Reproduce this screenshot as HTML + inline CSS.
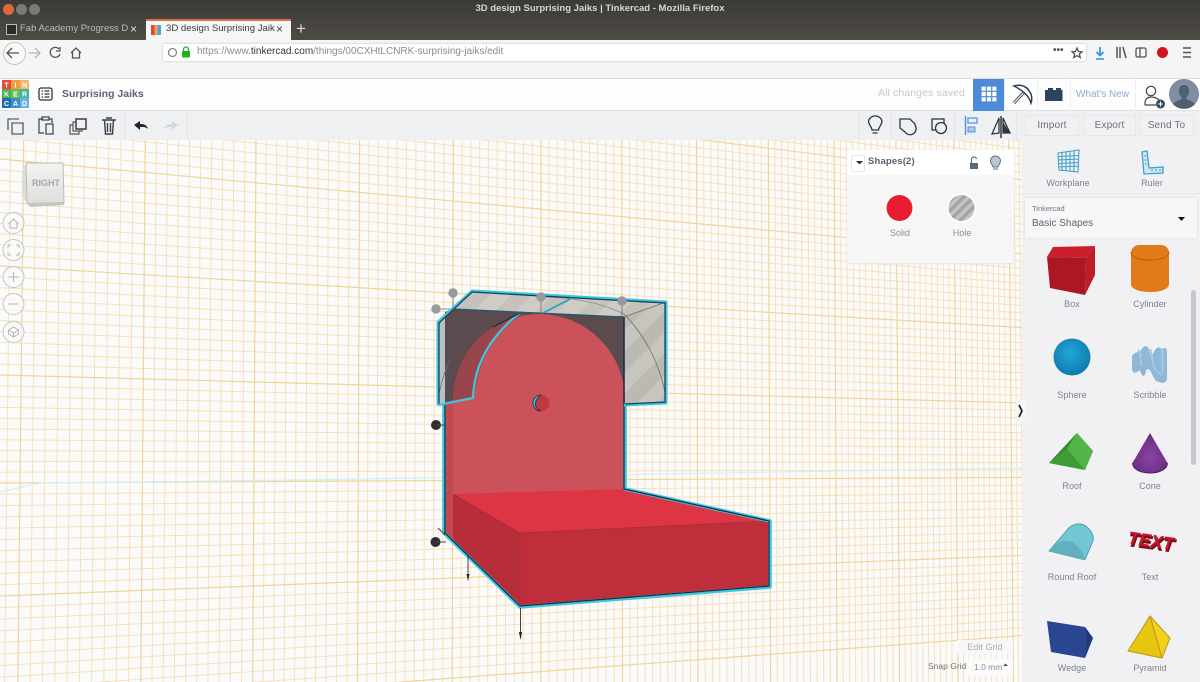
<!DOCTYPE html>
<html><head><meta charset="utf-8"><title>3D design Surprising Jaiks | Tinkercad</title>
<style>
html,body{margin:0;padding:0;width:1200px;height:682px;overflow:hidden;background:#fff;font-family:"Liberation Sans",sans-serif}
#r{position:relative;width:1200px;height:682px;overflow:hidden}
.a{position:absolute}
.t{position:absolute;white-space:nowrap;line-height:1}
.l{position:absolute;white-space:nowrap;line-height:1;font-size:9px;color:#7b8290;letter-spacing:.05px;text-align:center;width:70px}
svg{position:absolute;left:0;top:0;overflow:visible}
.b{position:absolute;top:115px;height:19px;border:1px solid #e6e7e9;background:#f0f1f3;color:#6d7178;font-size:10px;line-height:19px;text-align:center;letter-spacing:.15px;box-sizing:content-box}
</style></head><body><div id="r">
<!-- canvas -->
<svg id="g" width="1022" height="542" viewBox="0 140 1022 542" style="left:0;top:140px;background:#fbfbfc;overflow:hidden;filter:blur(.35px)"></svg>
<script>
(function(){var s='',v=[-110,22,144,255,359,453,541,622,697,769,835,897,955,1010,1062],h=[-60,52,159,266,375,483,596,712],i,j;
function V(x,c,w){var d=(x-560)*.00002;s+='<line x1="'+(x+d*(140-300)).toFixed(1)+'" y1="140" x2="'+(x+d*(682-300)).toFixed(1)+'" y2="682" stroke="'+c+'" stroke-width="'+w+'"/>';}
function H(y,c,w){var e=y+(465-y)*1022/3300;s+='<line x1="0" y1="'+y.toFixed(1)+'" x2="1022" y2="'+e.toFixed(1)+'" stroke="'+c+'" stroke-width="'+w+'"/>';}
for(i=0;i<v.length-1;i++)for(j=1;j<10;j++)V(v[i]+(v[i+1]-v[i])*j/10,'#f6e1ba',1);
for(i=0;i<h.length-1;i++)for(j=1;j<10;j++)H(h[i]+(h[i+1]-h[i])*j/10,'#f6e1ba',1);
for(i=0;i<v.length;i++)V(v[i],'#f1d49c',1.2);
for(i=0;i<h.length;i++)H(h[i],'#f1d49c',1.2);
document.getElementById('g').innerHTML=s;})();
</script>

<div class="a" style="left:0;top:0;width:1200px;height:40px;background:linear-gradient(#3b3a36,#4e4b44)"></div>
<div class="t" style="left:0;width:1200px;text-align:center;top:4px;font-size:9.5px;font-weight:bold;color:#d8d6d0">3D design Surprising Jaiks | Tinkercad - Mozilla Firefox</div>
<div class="a" style="left:3px;top:4px;width:11px;height:11px;border-radius:50%;background:#e0673a"></div>
<div class="a" style="left:16px;top:4px;width:11px;height:11px;border-radius:50%;background:#7b7a74"></div>
<div class="a" style="left:29px;top:4px;width:11px;height:11px;border-radius:50%;background:#7b7a74"></div>
<div class="a" style="left:6px;top:24px;width:9px;height:9px;background:#2a2a2a;border:1px solid #bbb"></div>
<div class="t" style="left:20px;top:24px;font-size:9.5px;color:#bdbcb6">Fab Academy Progress D</div>
<div class="t" style="left:130px;top:23px;font-size:12px;color:#ddd">×</div>
<div class="a" style="left:146px;top:19px;width:145px;height:21px;background:#f5f6f7;border-top:2px solid #d9704a;box-sizing:border-box"></div>
<div class="a" style="left:151px;top:25px;width:10px;height:10px;background:linear-gradient(90deg,#e8433a 33%,#f5a04b 33%,#f5a04b 66%,#4aa8d8 66%)"></div>
<div class="t" style="left:166px;top:24px;font-size:9.6px;color:#3c3c3c">3D design Surprising Jaik</div>
<div class="t" style="left:276px;top:23px;font-size:12px;color:#444">×</div>
<div class="t" style="left:296px;top:20px;font-size:17px;color:#ddd">+</div>
<div class="a" style="left:0;top:40px;width:1200px;height:39px;background:#f5f5f5;border-bottom:1px solid #dcdcdc;box-sizing:border-box"></div>
<div class="a" style="left:3px;top:42px;width:21px;height:21px;border-radius:50%;background:#fafafa;border:1px solid #c4c4c4"></div>
<div class="a" style="left:163px;top:44px;width:923px;height:17px;background:#fff;border-radius:2px;box-shadow:0 0 2px #bbb"></div>
<div class="t" style="left:197px;top:47px;font-size:10px;color:#8b8b8b">https://www.<span style="color:#333">tinkercad.com</span>/things/00CXHtLCNRK-surprising-jaiks/edit</div>
<div class="t" style="left:1053px;top:46px;font-size:10px;color:#555;font-weight:bold">•••</div>

<svg width="1200" height="682" viewBox="0 0 1200 682" style="z-index:1">
<g fill="none" stroke="#555" stroke-width="1.3">
<path d="M19 53H7M12 48l-5 5 5 5"/><path d="M40 53H29M35 48l5 5-5 5" stroke="#b5b5b5"/>
<path d="M59 49a5 5 0 1 0 1 5M60 47v4h-4"/><path d="M71 53l5-5 5 5M72.500 52v6h7v-6"/>
<circle cx="172.500" cy="52.500" r="4" stroke="#888"/>
<path d="M1077 48l1.500 3.500 3.500.3-2.700 2.300 1 3.500-3.300-2-3.300 2 1-3.500-2.700-2.300 3.500-.3z"/>
<path d="M1117 47v11M1120 47v11M1123 47l3 11" stroke-width="1.500"/><rect x="1136" y="48" width="10" height="9" rx="1.500"/><path d="M1140 48v9"/>
<path d="M1183 48h8M1183 52.500h8M1183 57h8" stroke-width="1.500"/>
</g>
<path d="M1100 47v8M1096.500 52l3.500 3.500 3.500-3.500M1096 59h8" fill="none" stroke="#2a90e0" stroke-width="1.600"/>
<circle cx="1162.500" cy="52.500" r="5.500" fill="#d0141c"/>
<rect x="182" y="51" width="8" height="6.500" rx="1" fill="#22b022"/><path d="M183.500 51v-1.500a2.500 2.500 0 0 1 5 0V51" fill="none" stroke="#22b022" stroke-width="1.300"/>
</svg>

<!-- header -->
<div class="a" style="left:0;top:79px;width:1200px;height:32px;background:#fdfdfd;border-bottom:1px solid #dfe1e4;box-sizing:border-box"></div>
<svg width="1200" height="682" viewBox="0 0 1200 682" style="z-index:1">
<g>
<rect x="2" y="80" width="9" height="9" fill="#e8483c"/><rect x="11" y="80" width="9" height="9" fill="#f29a42"/><rect x="20" y="80" width="9" height="9" fill="#f5b56a"/>
<rect x="2" y="89" width="9" height="9" fill="#4caf50"/><rect x="11" y="89" width="9" height="9" fill="#68bd55"/><rect x="20" y="89" width="9" height="9" fill="#45b29a"/>
<rect x="2" y="98" width="9" height="10" fill="#1f6fb0"/><rect x="11" y="98" width="9" height="10" fill="#3b8fd0"/><rect x="20" y="98" width="9" height="10" fill="#68b4e0"/>
</g>
<g font-family="Liberation Sans" font-size="7" font-weight="bold" fill="#fff" text-anchor="middle">
<text x="6.500" y="87.500">T</text><text x="15.500" y="87.500">I</text><text x="24.500" y="87.500">N</text>
<text x="6.500" y="96.500">K</text><text x="15.500" y="96.500">E</text><text x="24.500" y="96.500">R</text>
<text x="6.500" y="106">C</text><text x="15.500" y="106">A</text><text x="24.500" y="106">D</text></g>
<g fill="none" stroke="#333" stroke-width="1.300"><rect x="39" y="88" width="13" height="12" rx="2"/><path d="M41.500 91h1.500M41.500 94h1.500M41.500 97h1.500M44.500 91h5M44.500 94h5M44.500 97h5"/></g>
<rect x="973" y="79" width="32" height="32" fill="#4d8bd8"/>
<path d="M981 86h16v16h-16zM986.300 86v16M991.700 86v16M981 91.300h16M981 96.700h16" fill="#fff" stroke="#4d8bd8" stroke-width="1.200"/>
<path d="M1014 103l14-15" stroke="#2c3e50" stroke-width="3" fill="none"/>
<path d="M1014 103l14-15" stroke="#fff" stroke-width="1.200" fill="none"/>
<path d="M1014 86c7-2 13 0 17 8 1 3 1 6 0 9-2-7-9-13-17-17z" fill="#fff" stroke="#2c3e50" stroke-width="1.500"/>
<path d="M1045 90h3v-2h5v2h3v-2h5v2h1.500v11H1045z" fill="#2b4460"/>
<g fill="none" stroke="#3d4650" stroke-width="1.200"><circle cx="1151" cy="91" r="4.700"/><path d="M1145 105v-2c0-4 3-6 6-6s6 1 8 3M1145 105h11"/></g>
<circle cx="1160.500" cy="104" r="4.500" fill="#34495e"/><path d="M1158 104h5M1160.500 101.500v5" stroke="#fff" stroke-width="1"/>
<circle cx="1184" cy="94" r="15" fill="#7d8ea2"/>
<path d="M1184 85c-4 0-5 3-5 6 0 3 1.500 5 2.500 6.500v2c-3 1-6 1.500-8.500 4.500 2.500 3 6.500 4.500 11 4.500s8.500-1.500 11-4.500c-2.500-3-5.500-3.500-8.500-4.500v-2c1-1.500 2.500-3.500 2.500-6.500 0-3-1-6-5-6z" fill="#4f5e72"/>
<path d="M1004.500 79v32M1037.500 79v32M1070.500 79v32M1135.500 79v32" stroke="#eceef0"/>
</svg>
<div class="t" style="left:62px;top:89px;font-size:10.5px;font-weight:bold;color:#5a6472">Surprising Jaiks</div>
<div class="t" style="left:878px;top:88px;font-size:10.5px;color:#c3c9d1;letter-spacing:.1px">All changes saved</div>
<div class="t" style="left:1076px;top:90px;font-size:10px;color:#8fabd9">What's New</div>

<!-- toolbar -->
<div class="a" style="left:0;top:111px;width:1200px;height:29px;background:#eff0f2"></div>

<svg width="1200" height="682" viewBox="0 0 1200 682" style="z-index:2">
<defs>
<pattern id="s1" width="30" height="30" patternUnits="userSpaceOnUse" patternTransform="rotate(45)"><rect width="30" height="30" fill="#c8c5be"/><rect width="15" height="30" fill="#bcb9b2"/></pattern>
<pattern id="s2" width="30" height="30" patternUnits="userSpaceOnUse" patternTransform="rotate(45)"><rect width="30" height="30" fill="#cfccc6"/><rect width="15" height="30" fill="#c5c2bb"/></pattern>
<pattern id="s3" width="7" height="7" patternUnits="userSpaceOnUse" patternTransform="rotate(45)"><rect width="7" height="7" fill="#c4c4c4"/><rect width="3.500" height="7" fill="#a4a4a4"/></pattern>
</defs>
<path d="M0 492L40 483 300 480 1022 468" fill="none" stroke="#d5eef2" stroke-width="1.200"/>
<!-- hole box -->
<path d="M472 291L666 302 624 317 453 309z" fill="url(#s2)"/>
<path d="M624 317L666 302V403L624 405z" fill="url(#s1)"/>
<path d="M438 322L453 309 445 312V405H438z" fill="#b9c0c4"/>
<path d="M445 312L453 309 624 317V405H445z" fill="#5b4a4e"/>
<!-- wall -->
<path d="M453 400A86 86 0 0 1 625 400V500H444V405z" fill="#cb525b"/>
<path d="M453 400A86 86 0 0 1 520 316C500 330 480 350 474 398L453 402z" fill="#9a454b"/>
<path d="M444 404H453V500H444z" fill="#c04a52"/>
<!-- block -->
<path d="M444 490L453 495V542L444 533z" fill="#c24750"/>
<path d="M453 494L625 489 770 521 520 533z" fill="#de3545"/>
<path d="M453 494L520 533V607L453 541z" fill="#b72e3a"/>
<path d="M520 533L770 521V587L520 607z" fill="#be2f3b"/>
<path d="M453 494L520 533 770 521M520 533V607" fill="none" stroke="#a82a35" stroke-width=".7"/>
<!-- thin lines -->
<g fill="none" stroke="#6e6e6c" stroke-width=".8">
<path d="M624 314C645 335 660 365 665 393"/><path d="M541 297C570 297 600 302 624 314" stroke="#8a8a88"/><path d="M453 293V309M436 309H453M541 297V313M622 301V317M624 317L666 302M453 309L472 291"/>
<path d="M438 398C442 380 445 370 450 360"/>
</g>
<!-- outlines -->
<path d="M444 405V533L520 607 770 587V521L625 489V405" fill="none" stroke="#3fc6de" stroke-width="3.600" stroke-linejoin="round"/>
<path d="M445 405V533L520 606 769 586V521L624 489V317" fill="none" stroke="#14304a" stroke-width="1.300"/>
<path d="M624 317V405" stroke="#14304a" stroke-width="1.400"/>
<path d="M438 405V322L472 291 666 302V403L624 405" fill="none" stroke="#3fc6de" stroke-width="3" stroke-linejoin="round"/>
<path d="M439 404V323L472 292 665 303V402L625 404" fill="none" stroke="#16425a" stroke-width="1.300"/>
<path d="M453 309L624 317" stroke="#1d5a70" stroke-width="1.200" fill="none"/>
<path d="M438 405L473 398C474 370 485 340 520 313" fill="none" stroke="#3fc6de" stroke-width="2.200"/>
<path d="M493 327L520 313" stroke="#16304a" stroke-width="1.200" fill="none"/>
<path d="M543 313L572 298" stroke="#2aa0bc" stroke-width="1.800" fill="none"/>
<!-- center -->
<circle cx="541.500" cy="403" r="8" fill="#c23840"/>
<path d="M541 395a8 8 0 0 0 0 16c-5-2-6-5-5.500-8 .5-3 2-6 5.500-8z" fill="#3fc6de" stroke="#16304a" stroke-width=".8"/>
<!-- handles -->
<g fill="#9a9a9c"><circle cx="453" cy="293" r="4.700"/><circle cx="436" cy="309" r="4.700"/><circle cx="541" cy="297" r="4.700"/><circle cx="622" cy="301" r="4.700"/></g>
<g fill="#2e2e2e"><circle cx="436" cy="425" r="5"/><circle cx="435.500" cy="542" r="5"/></g>
<path d="M436 425H445M436 542H446M438 528L445 535" stroke="#444" stroke-width="1" fill="none"/>
<path d="M468 556V580M520.500 608V638" stroke="#444" stroke-width="1" fill="none"/>
<path d="M466.500 574L468 581 469.500 574zM519 632L520.500 640 522 632z" fill="#222"/>
</svg>

<!-- left nav -->
<svg width="1200" height="682" viewBox="0 0 1200 682" style="z-index:3">
<defs><linearGradient id="cb" x1="0" y1="0" x2="0" y2="1"><stop offset="0" stop-color="#f3f3f1"/><stop offset="1" stop-color="#dededc"/></linearGradient></defs>
<path d="M26 163L22 172V196L27 204z" fill="#dcdcda"/>
<path d="M26 163L63 163 64 203 27 204z" fill="url(#cb)" stroke="#bcbcb8"/>
<path d="M27 203L64 202V205L30 207z" fill="#c4c4c2"/>
<text x="46" y="186" font-family="Liberation Sans" font-size="9" font-weight="bold" text-anchor="middle" fill="#a6a6a6">RIGHT</text>
<g fill="#fbfbfb" fill-opacity=".75" stroke="#c4c4c6">
<circle cx="13.500" cy="223" r="10.500"/><circle cx="13.500" cy="250" r="10.500"/><circle cx="13.500" cy="277" r="10.500"/><circle cx="13.500" cy="304" r="10.500"/><circle cx="13.500" cy="332" r="10.500"/></g>
<g fill="none" stroke="#b4b4b6"><path d="M8.500 224l5-5 5 5M10 223v5h7v-5"/><path d="M8 248v-3h3M16 245h3v3M19 252v3h-3M11 255H8v-3"/><path d="M8.500 277h10M13.500 272v10"/><path d="M8.500 304h10"/><path d="M13.500 327l5 3v4l-5 3-5-3v-4zM8.500 330l5 3 5-3M13.500 333v4"/></g>

<!-- toolbar icons -->
<g fill="none" stroke="#3a3f46" stroke-width="1.200">
<path d="M8 130V119h11M12 134v-11h11v11z" stroke-width="1.100"/>
<path d="M39 129v-10h4M49 119h3v4M39 129l0 4h5"/><rect x="42" y="117" width="7" height="3"/><rect x="46" y="124" width="7" height="10"/>
<rect x="76" y="119" width="10" height="10" stroke-width="1.500"/><path d="M76 122h-3v9h9v-2M73 125h-3v9h9v-3" stroke="#555"/>
<path d="M102 120h14M104.500 120l1 14h7l1-14M106 118h6M107.500 123v9M110.500 123v9" stroke-width="1.400"/>
</g>
<path d="M134 125l6-4v3c4 0 7 1 8 5-2-2-4-2-8-2v3z" fill="#22262b"/>
<path d="M178 125l-6-4v3c-4 0-7 1-8 5 2-2 4-2 8-2v3z" fill="#cfd6e0"/>
<path d="M124.500 112v28M187.500 112v28M859.500 112v28M891.500 112v28M954.500 112v28M1016.500 112v28" stroke="#e3e4e6"/>
<g fill="none" stroke="#2f3640" stroke-width="1.300">
<path d="M872 130c0-3-3.500-5-3.500-9a7 7 0 0 1 13.500 0c0 4-3.500 6-3.500 9zM872.500 133h5"/>
<path d="M900 119h10l5 5v1c1 1 1 3 1 3a6 6 0 0 1-11 4l-5-4z"/>
<rect x="932" y="119" width="12" height="11"/><circle cx="941" cy="128" r="5.500" fill="#eff0f2"/>
<path d="M1001 116v22" stroke-width="1.500"/><path d="M999 118v15l-7 1zM1003 118l7 15h-7z"/>
</g>
<path d="M1003 122v11h7z" fill="#2f3640"/>
<path d="M965.500 116v19" stroke="#5b95e0" stroke-width="1.500"/>
<rect x="968" y="118" width="9" height="5" fill="none" stroke="#5b95e0" stroke-width="1.300"/><rect x="968" y="127" width="7" height="5" fill="#a9c7ef" stroke="#5b95e0"/>
</svg>
<div class="b" style="left:1025px;width:52px;z-index:3">Import</div>
<div class="b" style="left:1083px;width:51px;z-index:3">Export</div>
<div class="b" style="left:1139px;width:53px;z-index:3">Send To</div>

<!-- Shapes panel -->
<div class="a" style="left:847px;top:150px;width:167px;height:113px;background:#f6f6f7;box-shadow:0 1px 2px #e4e4e4;z-index:3"></div>
<div class="a" style="left:847px;top:150px;width:167px;height:25px;background:#fff;z-index:3"></div>
<div class="a" style="left:851px;top:155px;width:12px;height:15px;border:1px solid #e6e6e6;border-radius:2px;background:#fff;z-index:3"></div>
<div class="t" style="left:868px;top:157px;font-size:9.5px;font-weight:bold;color:#59616d;letter-spacing:.15px;z-index:3">Shapes(2)</div>
<div class="t" style="left:880px;top:229px;width:40px;text-align:center;font-size:9px;color:#8d9198;z-index:3">Solid</div>
<div class="t" style="left:942px;top:229px;width:40px;text-align:center;font-size:9px;color:#8d9198;z-index:3">Hole</div>

<!-- right panel -->
<div class="a" style="left:1022px;top:140px;width:178px;height:542px;background:#f1f1f4;z-index:3"></div>
<div class="a" style="left:1022px;top:193px;width:178px;height:1px;background:#e8e8ea;z-index:3"></div>
<div class="a" style="left:1025px;top:198px;width:172px;height:40px;background:#f7f7f8;box-shadow:0 0 2px #d8d8da;z-index:3"></div>
<div class="t" style="left:1032px;top:205px;font-size:7.5px;color:#6e7480;z-index:3">Tinkercad</div>
<div class="t" style="left:1032px;top:219px;font-size:10px;color:#5c6470;z-index:3">Basic Shapes</div>
<div class="a" style="left:1191px;top:290px;width:5px;height:175px;background:#c8c9cd;border-radius:3px;z-index:3"></div>
<div class="l" style="left:1033px;top:179px;z-index:3">Workplane</div>
<div class="l" style="left:1117px;top:179px;z-index:3">Ruler</div>
<div class="l" style="left:1037px;top:300px;z-index:3">Box</div>
<div class="l" style="left:1115px;top:300px;z-index:3">Cylinder</div>
<div class="l" style="left:1037px;top:391px;z-index:3">Sphere</div>
<div class="l" style="left:1115px;top:391px;z-index:3">Scribble</div>
<div class="l" style="left:1037px;top:482px;z-index:3">Roof</div>
<div class="l" style="left:1115px;top:482px;z-index:3">Cone</div>
<div class="l" style="left:1037px;top:573px;z-index:3">Round Roof</div>
<div class="l" style="left:1115px;top:573px;z-index:3">Text</div>
<div class="l" style="left:1037px;top:664px;z-index:3">Wedge</div>
<div class="l" style="left:1115px;top:664px;z-index:3">Pyramid</div>
<div class="a" style="left:1016px;top:400px;width:9px;height:22px;background:#f6f6f7;z-index:3"></div>
<div class="a" style="left:957px;top:640px;width:56px;height:14px;background:#f8f8f9;color:#a8acb2;font-size:9px;line-height:14px;text-align:center;z-index:3">Edit Grid</div>
<div class="t" style="left:928px;top:662px;font-size:8.5px;color:#6a7078;z-index:3">Snap Grid</div>
<div class="a" style="left:968px;top:659px;width:45px;height:17px;background:#fbfbfb;color:#8a8e94;font-size:8.5px;line-height:17px;padding-left:6px;box-sizing:border-box;z-index:3">1.0 mm</div>

<svg width="1200" height="682" viewBox="0 0 1200 682" style="z-index:4">
<path d="M856 161l3.500 3.500 3.500-3.500z" fill="#333"/>
<rect x="970" y="163" width="8" height="6" fill="#56687c"/><path d="M971.500 163v-3a2.500 2.500 0 0 1 5-1" fill="none" stroke="#56687c" stroke-width="1.200"/>
<path d="M993 167c0-2-2.500-3-2.500-6a5 5 0 0 1 10 0c0 3-2.500 4-2.500 6z" fill="#bcc6d0" stroke="#66727e"/><path d="M993 169h5" stroke="#66727e"/>
<circle cx="899.500" cy="208" r="15" fill="#fff"/><circle cx="899.500" cy="208" r="13" fill="#ea1d30"/>
<circle cx="961.500" cy="208" r="15" fill="#fff"/><circle cx="961.500" cy="208" r="13" fill="url(#s3)"/>
<path d="M1178 217l3.500 4 3.500-4z" fill="#111"/>
<!-- workplane -->
<g fill="none" stroke="#3f9fc8" stroke-width="1.100"><path d="M1058 153l21-3-1 22-19-2zM1062 152.500v18M1066 152v19M1070 151.500v19.500M1074 151v20.500M1058 156.500l21-1M1058 160l20.500-1M1058.500 163.500l20-1M1058.500 167l20-1"/></g>
<!-- ruler -->
<path d="M1142 152l5-1 2 17 14-1v6l-19 1z" fill="#cfe9f4" stroke="#3f9fc8" stroke-width="1.300"/>
<path d="M1144 156h2M1144.500 160h2M1145 164h2M1152 171v-2M1156 171v-2M1160 171v-2" stroke="#3f9fc8"/>
<!-- box -->
<path d="M1053 247l42-1-9 12-39-1z" fill="#cc1f2c"/><path d="M1047 257l39 1-1 37-35-7z" fill="#ab1823"/><path d="M1086 258l9-12v29l-10 20z" fill="#be1c27"/>
<!-- cylinder -->
<path d="M1131 253c0-5 4-8 8-8h22c4 0 8 3 8 8v31c0 5-8 8-19 8s-19-3-19-8z" fill="#e17b18"/>
<path d="M1131 252c0 5 8 8 19 8s19-3 19-8" fill="none" stroke="#b56012" stroke-width="1"/>
<!-- sphere -->
<defs><radialGradient id="sp" cx=".45" cy=".4" r=".65"><stop offset="0" stop-color="#22a6dc"/><stop offset="1" stop-color="#0e78a8"/></radialGradient>
<radialGradient id="cn" cx=".5" cy=".6" r=".6"><stop offset="0" stop-color="#8a44a4"/><stop offset="1" stop-color="#672a80"/></radialGradient></defs>
<circle cx="1072" cy="357" r="18.500" fill="url(#sp)"/>
<!-- scribble -->
<path d="M1132 356c3-5 8-3 9-6 3-5 7-5 8 0s2 8 5 2c2-5 5-6 8-3 3-2 5-1 5 3v26c0 3-2 5-5 5l-6-2c-3-3-5-12-8-12-3 0-2 8-5 7-2-1-2-5-4-6-1 2-1 2-5 3l-2-3z" fill="#8fb7d8"/>
<path d="M1138 350c3 3 3 10 3 16M1150 349c2 5 2 9 3 15 1 5 5 9 9 11M1162 349c1 6 0 16 1 24" fill="none" stroke="#a8c8e0" stroke-width="2"/>
<!-- roof -->
<path d="M1049 463l28-30 16 18-8 19z" fill="#48a83e"/><path d="M1049 463l18-14 18 21z" fill="#3f9a38"/><path d="M1067 449l-18 14 28-30z" fill="#358a30"/><path d="M1067 449l10-16 16 18-8 19z" fill="#52b646"/>
<!-- cone -->
<path d="M1150 433l17.500 30c0 6-8 10-17.500 10s-17.500-4-17.500-10z" fill="url(#cn)"/>
<path d="M1132.500 463c0 6 8 10 17.500 10s17.500-4 17.500-10" fill="none" stroke="#4f1f66" stroke-width="1"/>
<!-- round roof -->
<path d="M1049 551L1067 530C1072 523 1082 522 1087 527 1093 532 1094 538 1093 541L1085 560z" fill="#72c6d6" stroke="#3f8b9c" stroke-width=".7"/>
<path d="M1049 551C1056 541 1066 539 1072 542 1079 546 1084 553 1085 560z" fill="#62afc0"/>
<!-- text -->
<text x="1152" y="549" font-family="Liberation Sans" font-size="18" font-weight="bold" font-style="italic" text-anchor="middle" fill="#7c0f1a" stroke="#7c0f1a" stroke-width="1" transform="rotate(8 1152 540)">TEXT</text>
<text x="1151" y="547" font-family="Liberation Sans" font-size="18" font-weight="bold" font-style="italic" text-anchor="middle" fill="#c21a2a" transform="rotate(8 1152 540)">TEXT</text>
<!-- wedge -->
<path d="M1047 621l38 6 8 11-8 20-34-6z" fill="#2a4690"/><path d="M1085 627l8 11-8 20 2-15z" fill="#22397a"/>
<!-- pyramid -->
<path d="M1150 616l20 22-8 20-34-7z" fill="#e8c511"/><path d="M1150 616l20 22-8 20z" fill="#f0d21e"/>
<path d="M1150 616l12 42M1150 616l-22 35 34 7 8-20z" fill="none" stroke="#b89a08" stroke-width="1"/>
<!-- chevron -->
<path d="M1019 405l3 6-3 6" fill="none" stroke="#111" stroke-width="1.600"/>
<path d="M1003 666l2.500-2.500 2.500 2.500z" fill="#555"/>
</svg>
</div></body></html>
